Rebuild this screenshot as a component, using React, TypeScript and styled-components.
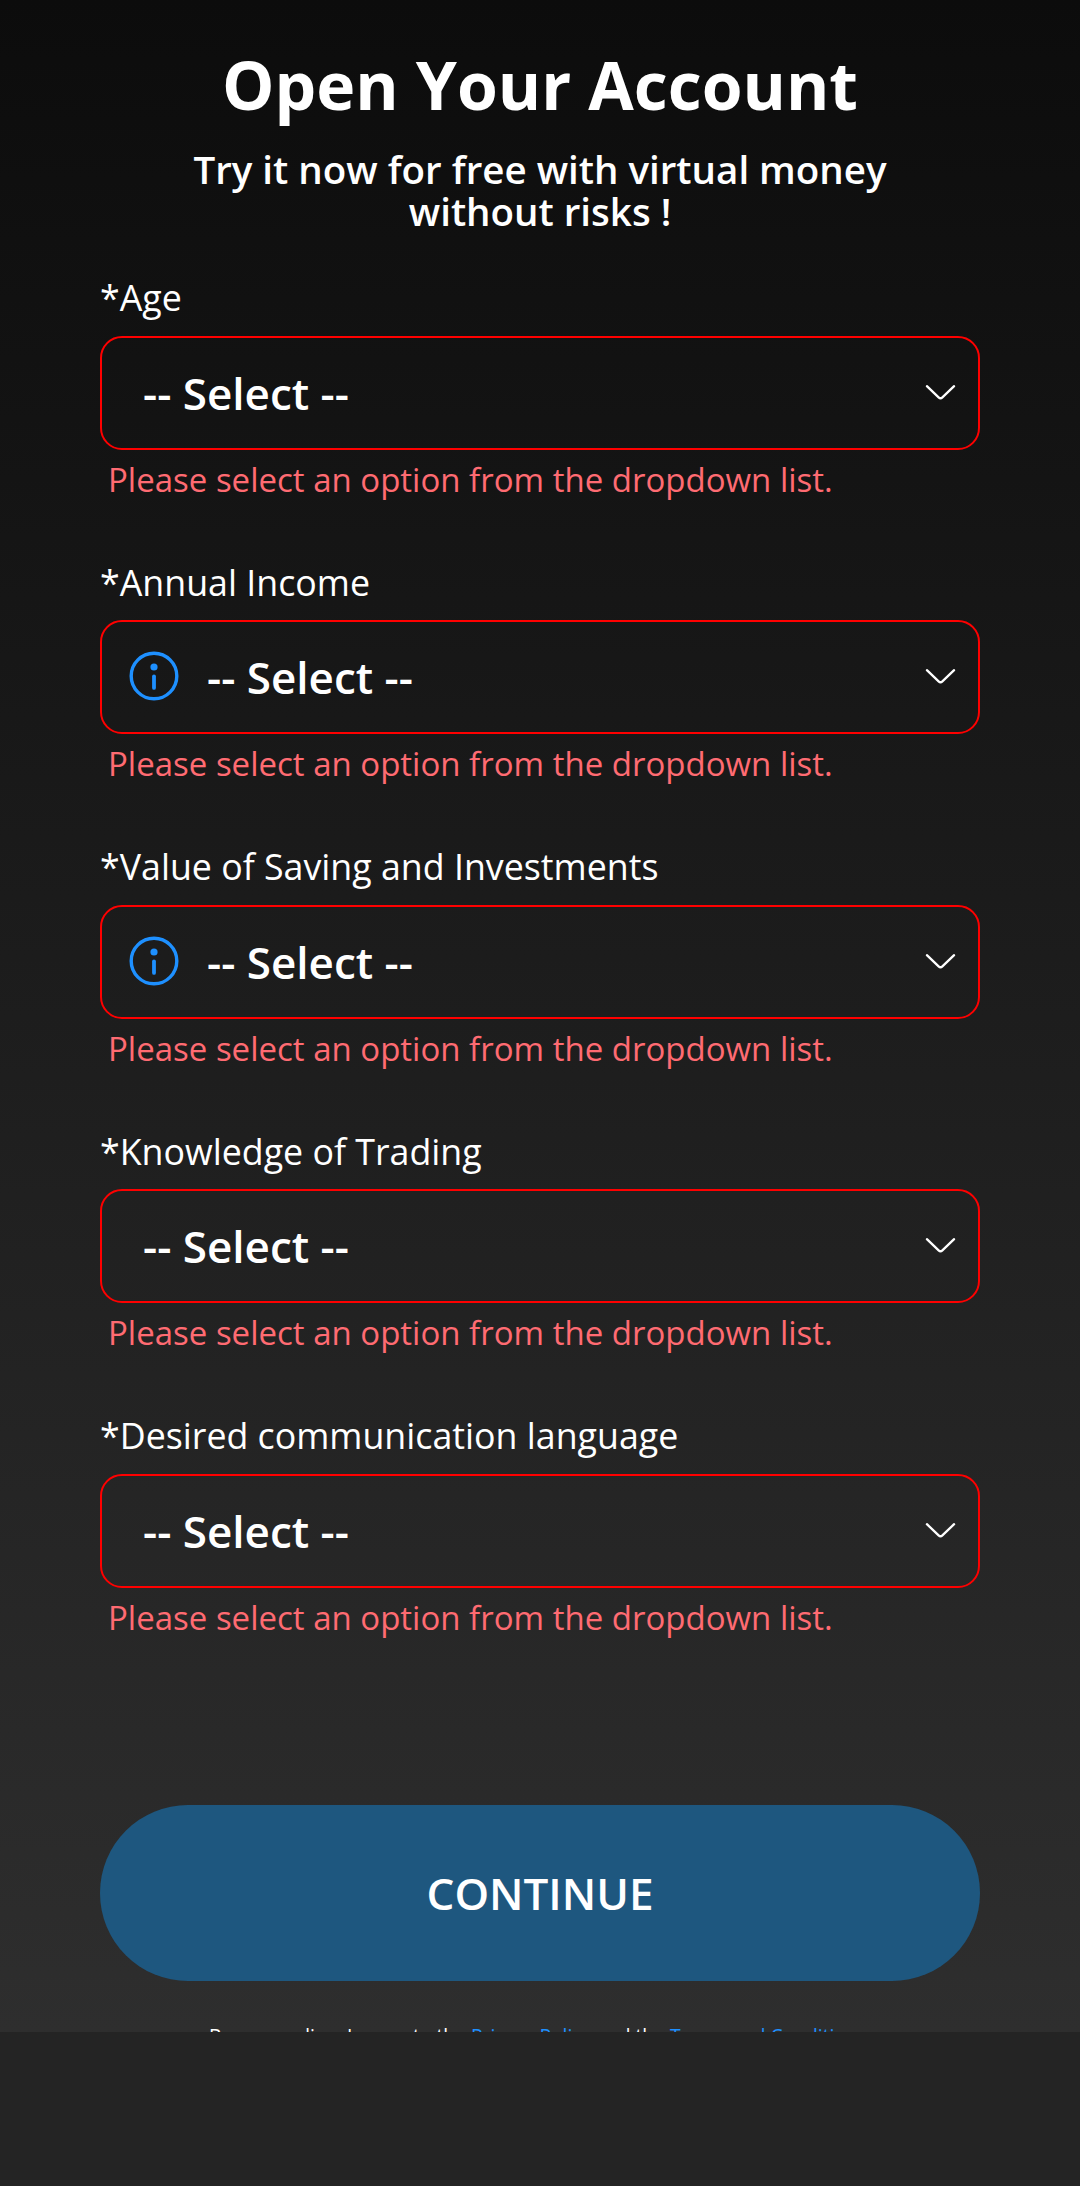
import React from "react";
import styled, { createGlobalStyle } from "styled-components";

const GlobalStyle = createGlobalStyle`
  *, *::before, *::after { box-sizing: border-box; }
  body {
    margin: 0;
    background: #242424;
    color: #fff;
    font-family: "Open Sans", "Noto Sans", sans-serif;
  }
`;

const Screen = styled.main`
  display: flex;
  flex-direction: column;
  height: 2032px;
  padding: 38px 100px 0;
  overflow: hidden;
  background: linear-gradient(180deg, #0c0c0c 0%, #2e2e2e 100%);

  > * {
    flex: none;
  }
`;

const Header = styled.header`
  display: flex;
  flex-direction: column;
  align-items: center;
  height: 235px;
  text-align: center;
`;

const Title = styled.h1`
  margin: 0;
  font-size: 66px;
  font-weight: 700;
  line-height: 92px;
`;

const Subtitle = styled.p`
  width: 740px;
  margin: 17.5px 0 0;
  font-size: 38.5px;
  font-weight: 600;
  line-height: 42.35px;
`;

const Form = styled.form`
  display: flex;
  flex-direction: column;
`;

const Field = styled.div`
  display: flex;
  flex-direction: column;
  height: 284.5px;
`;

const Label = styled.label`
  height: 62.9px;
  font-size: 35.75px;
  line-height: 48px;
`;

const SelectBox = styled.button<{ $withInfo: boolean }>`
  display: flex;
  align-items: center;
  flex: none;
  height: 114px;
  padding: 0 22px 0 ${(p) => (p.$withInfo ? 27 : 41)}px;
  border: 2px solid #ff0000;
  border-radius: 22px;
  background: transparent;
  color: #fff;
  font: 600 44px/60px "Open Sans", "Noto Sans", sans-serif;
  text-align: left;
`;

const Value = styled.span`
  flex: 1;
`;

const InfoIcon = styled.svg`
  width: 50px;
  height: 50px;
  margin: 0 28px 2.6px 0;
`;

const Chevron = styled.svg`
  width: 31px;
  height: 17px;
  margin-bottom: 1px;
`;

const ErrorText = styled.p`
  margin: 7.1px 0 0 8px;
  color: #ff6b72;
  font-size: 33px;
  line-height: 46px;
`;

const Submit = styled.button`
  height: 176px;
  margin-top: 109.5px;
  border: 0;
  border-radius: 88px;
  background: #1e577f;
  color: #fff;
  font: 600 44px/60px "Open Sans", "Noto Sans", sans-serif;
`;

const Legal = styled.p`
  margin: 41.2px 0 0;
  padding-right: 4px;
  font-size: 19.25px;
  line-height: 28px;
  text-align: center;
  white-space: nowrap;
`;

const LegalLink = styled.a`
  color: #1e90ff;
  text-decoration: none;
`;

const fields = [
  { id: "age", label: "Age", info: false },
  { id: "income", label: "Annual Income", info: true },
  { id: "savings", label: "Value of Saving and Investments", info: true },
  { id: "knowledge", label: "Knowledge of Trading", info: false },
  { id: "language", label: "Desired communication language", info: false },
];

function SelectField({ id, label, info }: { id: string; label: string; info: boolean }) {
  return (
    <Field>
      <Label htmlFor={id}>*{label}</Label>
      <SelectBox id={id} type="button" $withInfo={info}>
        {info && (
          <InfoIcon viewBox="0 0 50 50" fill="none" aria-hidden="true">
            <circle cx="25" cy="25" r="22.8" stroke="#1e90ff" strokeWidth="3.4" />
            <circle cx="25" cy="16" r="3.6" fill="#1e90ff" />
            <path d="M25 25.3v11.6" stroke="#1e90ff" strokeWidth="3.8" strokeLinecap="round" />
          </InfoIcon>
        )}
        <Value>-- Select --</Value>
        <Chevron viewBox="0 0 31 17" fill="none" aria-hidden="true">
          <path
            d="M1.9 2.2 13.6 13.4Q15.5 15.2 17.4 13.4L29.1 2.2"
            stroke="#fff"
            strokeWidth="2.3"
            strokeLinecap="round"
          />
        </Chevron>
      </SelectBox>
      <ErrorText>Please select an option from the dropdown list.</ErrorText>
    </Field>
  );
}

export default function App() {
  return (
    <>
      <GlobalStyle />
      <Screen>
        <Header>
          <Title>Open Your Account</Title>
          <Subtitle>Try it now for free with virtual money without risks !</Subtitle>
        </Header>
        <Form>
          {fields.map((f) => (
            <SelectField key={f.id} {...f} />
          ))}
          <Submit type="button">CONTINUE</Submit>
        </Form>
        <Legal>
          By proceeding, I agree to the <LegalLink>Privacy Policy</LegalLink> and the{" "}
          <LegalLink>Terms and Conditions</LegalLink>
        </Legal>
      </Screen>
    </>
  );
}
